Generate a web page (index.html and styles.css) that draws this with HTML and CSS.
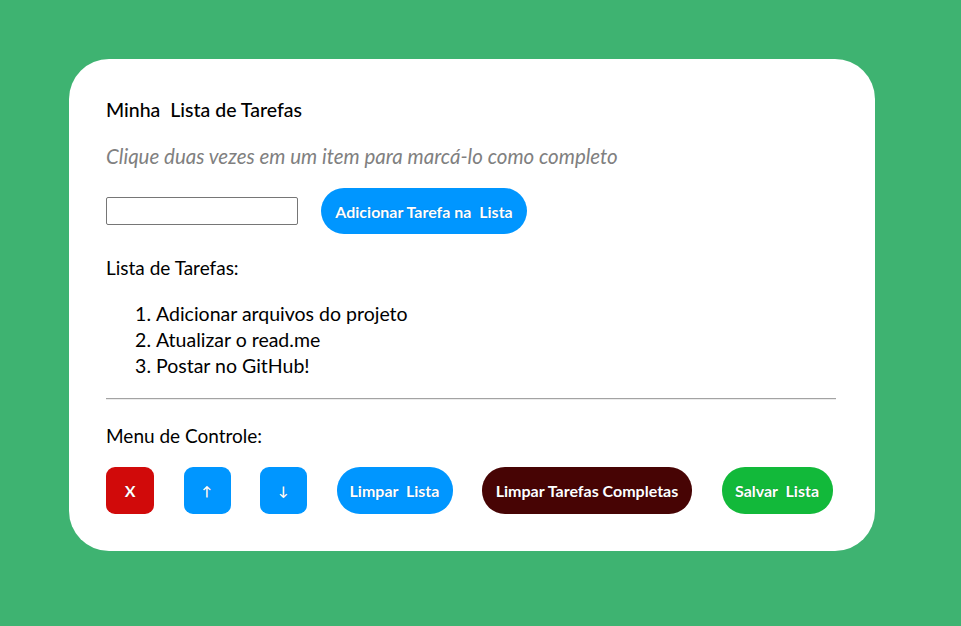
FILE: index.html
```html
<!DOCTYPE html>
<html lang="pt-BR">
<head>
<meta charset="utf-8">
<title>Minha Lista de Tarefas</title>
<link rel="stylesheet" href="styles.css">
</head>
<body>
<main class="card">
  <h1 class="title">Minha&nbsp; Lista de Tarefas</h1>
  <p class="hint">Clique duas vezes em um item para marcá-lo como completo</p>
  <div class="add-row">
    <input class="task-input" type="text">
    <button class="btn btn-blue btn-add">Adicionar Tarefa na&nbsp; Lista</button>
  </div>
  <p class="label">Lista de Tarefas:</p>
  <ol class="tasks">
    <li>Adicionar arquivos do projeto</li>
    <li>Atualizar o read.me</li>
    <li>Postar no GitHub!</li>
  </ol>
  <hr class="divider">
  <p class="label label-menu">Menu de Controle:</p>
  <div class="controls">
    <button class="btn btn-red btn-square btn-x">X</button>
    <button class="btn btn-blue btn-square btn-arrow">↑</button>
    <button class="btn btn-blue btn-square btn-arrow">↓</button>
    <button class="btn btn-blue btn-clear">Limpar&nbsp; Lista</button>
    <button class="btn btn-maroon btn-done">Limpar Tarefas Completas</button>
    <button class="btn btn-green btn-save">Salvar&nbsp; Lista</button>
  </div>
</main>
</body>
</html>
```

FILE: styles.css
```css
html, body {
  margin: 0;
  padding: 0;
}
body {
  background: #3eb371;
  font-family: Lato, "Open Sans", sans-serif;
  color: #000;
  height: 626px;
  overflow: hidden;
}
.card {
  box-sizing: border-box;
  width: 806px;
  height: 492px;
  margin: 59px 0 0 69px;
  background: #fff;
  border-radius: 40px;
  padding: 40px 39px 37px 37px;
}
.title {
  margin: 0;
  font-size: 19.5px;
  line-height: 22px;
  font-weight: 500;
}
.hint {
  margin: 23px 0 0;
  font-size: 20.5px;
  line-height: 24px;
  font-style: italic;
  color: #808080;
}
.add-row {
  margin-top: 20px;
  display: flex;
  align-items: center;
  gap: 23px;
}
.task-input {
  box-sizing: border-box;
  width: 192px;
  height: 28px;
  margin: 0;
  border: 1px solid #767676;
  border-radius: 2px;
  padding: 1px 2px;
}
.label {
  margin: 22px 0 0;
  font-size: 19px;
  line-height: 24px;
}
.tasks {
  margin: 21px 0 0;
  padding-left: 50px;
  font-size: 19.5px;
  line-height: 26px;
}
.divider {
  margin: 19px 0 0;
  border: 0;
  border-top: 1px solid #a3a3a3;
  border-bottom: 1px solid #ececec;
  height: 0;
}
.label-menu {
  margin-top: 24px;
}
.controls {
  margin-top: 19px;
  display: flex;
  gap: 29.5px;
}
.btn {
  box-sizing: border-box;
  height: 46px;
  border: 0;
  margin: 0;
  padding: 0;
  border-radius: 23px;
  color: #fff;
  font-family: Lato, "Open Sans", sans-serif;
  font-weight: 700;
  font-size: 16px;
  text-shadow: 0 0 1px rgba(0, 0, 40, 0.35);
  cursor: pointer;
}
.btn-blue { background: #0096ff; }
.btn-red { background: #d10a0a; }
.btn-maroon { background: #470404; }
.btn-green { background: #12b93a; }
.btn-add { width: 206px; }
.controls .btn { height: 47px; }
.btn-square {
  width: 47px;
  border-radius: 9px;
}
.btn-x { width: 48px; }
.btn-arrow { font-size: 13px; }
.btn-clear { width: 116px; }
.btn-done { width: 210px; }
.btn-save { width: 111px; }
```
